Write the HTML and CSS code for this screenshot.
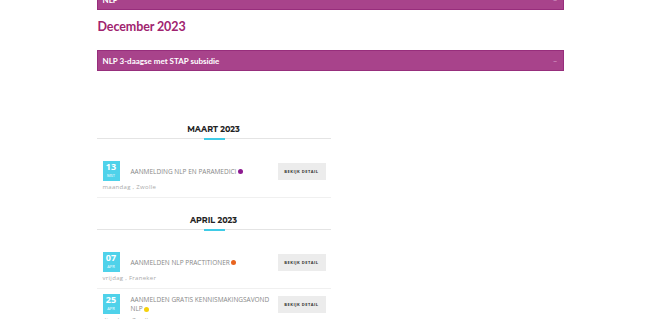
FILE: index.html
```html
<!DOCTYPE html>
<html lang="nl">
<head>
    <meta charset="UTF-8">
    <meta name="viewport" content="width=device-width, initial-scale=1.0">
    <title>Agenda</title>
    <link rel="stylesheet" href="styles.css">
</head>
<body>
    <div class="page">
        <div class="acc acc-top">
            <span>NLP</span>
            <span class="acc-sign">&ndash;</span>
        </div>

        <h2 class="month-title">December 2023</h2>

        <div class="acc">
            <span>NLP 3-daagse met STAP subsidie</span>
            <span class="acc-sign">&ndash;</span>
        </div>

        <div class="events">
            <div class="month-head">
                <h3>MAART 2023</h3>
            </div>

            <div class="event">
                <div class="event-main">
                    <div class="date">
                        <span class="day">13</span>
                        <span class="mon">MST</span>
                    </div>
                    <div class="event-title">AANMELDING NLP EN PARAMEDICI <span class="dot purple"></span></div>
                    <a class="btn" href="#">BEKIJK DETAIL</a>
                </div>
                <div class="event-meta">maandag , Zwolle</div>
            </div>

            <div class="month-head">
                <h3>APRIL 2023</h3>
            </div>

            <div class="event">
                <div class="event-main">
                    <div class="date">
                        <span class="day">07</span>
                        <span class="mon">APR</span>
                    </div>
                    <div class="event-title">AANMELDEN NLP PRACTITIONER <span class="dot orange"></span></div>
                    <a class="btn" href="#">BEKIJK DETAIL</a>
                </div>
                <div class="event-meta">vrijdag , Franeker</div>
            </div>

            <div class="event">
                <div class="event-main">
                    <div class="date">
                        <span class="day">25</span>
                        <span class="mon">APR</span>
                    </div>
                    <div class="event-title">AANMELDEN GRATIS KENNISMAKINGSAVOND NLP <span class="dot yellow"></span></div>
                    <a class="btn" href="#">BEKIJK DETAIL</a>
                </div>
                <div class="event-meta">dinsdag , Zwolle</div>
            </div>
        </div>
    </div>
</body>
</html>
```

FILE: styles.css
```css
body {
    margin: 0;
    font-family: "Open Sans", Arial, sans-serif;
    background-color: #fff;
    color: #777;
}
.page {
    width: 467px;
    margin: 0 auto;
}
.acc {
    display: flex;
    justify-content: space-between;
    align-items: center;
    height: 21px;
    box-sizing: border-box;
    padding: 0 5px;
    background-color: #a8438b;
    border: 1px solid #972e7c;
    color: #fff;
    font-family: "Lato", sans-serif;
    font-size: 8px;
    font-weight: bold;
}
.acc-top {
    margin-top: -11px;
}
.acc-sign {
    color: #d9a6cb;
    font-weight: normal;
}
.month-title {
    margin: 8px 0 14px 1px;
    color: #a0236f;
    font-family: "Lato", sans-serif;
    font-size: 12.5px;
    font-weight: bold;
    letter-spacing: -0.1px;
    line-height: 18px;
}
.events {
    width: 234px;
    margin-top: 53px;
}
.month-head {
    position: relative;
    text-align: center;
    border-bottom: 1px solid #e4e4e4;
    margin-bottom: 20px;
}
.event + .month-head {
    margin-top: 17px;
}
.month-head h3 {
    margin: 0;
    padding-bottom: 4px;
    color: #222;
    font-family: "Montserrat", "Open Sans", sans-serif;
    font-size: 8px;
    font-weight: bold;
    line-height: 10px;
}
.month-head::after {
    content: "";
    position: absolute;
    left: 50%;
    bottom: -2px;
    width: 21px;
    height: 2px;
    margin-left: -10px;
    background-color: #3fcbe6;
}
.event {
    padding: 2px 0 6px;
    border-bottom: 1px solid #f0f0f0;
    margin-bottom: 3px;
}
.event-main {
    display: flex;
    align-items: center;
    padding-left: 6px;
}
.date {
    display: flex;
    flex-direction: column;
    align-items: center;
    width: 17px;
    height: 20px;
    background-color: #4fd2ea;
    color: #fff;
}
.day {
    font-size: 9px;
    font-weight: bold;
    line-height: 11px;
}
.mon {
    font-size: 4px;
    line-height: 7px;
}
.event-title {
    flex: 1;
    margin-left: 11px;
    color: #888;
    font-size: 6.5px;
    line-height: 9px;
}
.dot {
    display: inline-block;
    width: 5px;
    height: 5px;
    border-radius: 50%;
    vertical-align: middle;
}
.purple { background-color: #8d1a90; }
.orange { background-color: #e8641f; }
.yellow { background-color: #f5d10a; }
.btn {
    width: 48px;
    height: 17px;
    margin-right: 5px;
    line-height: 17px;
    background-color: #ececec;
    color: #333;
    font-size: 4px;
    font-weight: bold;
    letter-spacing: 0.5px;
    text-align: center;
    text-decoration: none;
}
.event-meta {
    margin-top: 3px;
    padding-left: 6px;
    color: #aaa;
    font-size: 6px;
    letter-spacing: 0.3px;
    line-height: 7px;
}
```
